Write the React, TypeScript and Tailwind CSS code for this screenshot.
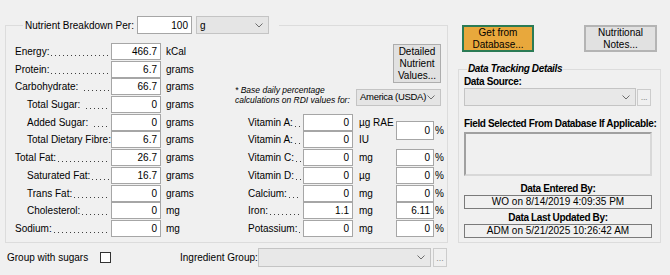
import React from "react";

// chevron used by the combo boxes
const Chevron = () => (
	<svg width="8" height="5" viewBox="0 0 8 5" className="shrink-0">
		<path d="M0.5 0.5 L4 4 L7.5 0.5" fill="none" stroke="#6d6d6d" strokeWidth="1" />
	</svg>
);

const Combo = ({ value, className = "" }: { value?: string; className?: string }) => (
	<div
		className={`flex items-center justify-between whitespace-nowrap border border-[#c4c4c4] bg-[#e5e5e5] pl-[3px] pr-[5px] ${className}`}
	>
		<span>{value}</span>
		<Chevron />
	</div>
);

const DotsButton = ({ className = "" }: { className?: string }) => (
	<div
		className={`flex items-end justify-center border border-[#cccccc] bg-[#f0f0f0] pb-[3px] text-[9px] leading-none text-[#8a8a8a] ${className}`}
	>
		...
	</div>
);

const Box = ({ value, className = "" }: { value: string; className?: string }) => (
	<div
		className={`flex shrink-0 items-center justify-end border border-[#a6a6a6] bg-white pr-[3px] ${className}`}
	>
		{value}
	</div>
);

// dotted leader between a label and its field
const Leader = ({ className = "" }: { className?: string }) => (
	<span
		className={`h-[17px] min-w-0 flex-1 bg-[linear-gradient(to_right,#404040_1px,transparent_1px)] bg-[length:4px_1px] bg-[position:0_12px] bg-repeat-x ${className}`}
	/>
);

const nutrients = [
	{ label: "Energy:", value: "466.7", unit: "kCal", indent: false, dots: true },
	{ label: "Protein:", value: "6.7", unit: "grams", indent: false, dots: true },
	{ label: "Carbohydrate:", value: "66.7", unit: "grams", indent: false, dots: true, gap: true },
	{ label: "Total Sugar:", value: "0", unit: "grams", indent: true, dots: true, gap: true },
	{ label: "Added Sugar:", value: "0", unit: "grams", indent: true, dots: true, gap: true },
	{ label: "Total Dietary Fibre:", value: "6.7", unit: "grams", indent: true, dots: false },
	{ label: "Total Fat:", value: "26.7", unit: "grams", indent: false, dots: true },
	{ label: "Saturated Fat:", value: "16.7", unit: "grams", indent: true, dots: true },
	{ label: "Trans Fat:", value: "0", unit: "grams", indent: true, dots: true },
	{ label: "Cholesterol:", value: "0", unit: "mg", indent: true, dots: true },
	{ label: "Sodium:", value: "0", unit: "mg", indent: false, dots: true },
];

const vitamins = [
	{ label: "Vitamin C:", value: "0", unit: "mg", pct: "0" },
	{ label: "Vitamin D:", value: "0", unit: "µg", pct: "0" },
	{ label: "Calcium:", value: "0", unit: "mg", pct: "0" },
	{ label: "Iron:", value: "1.1", unit: "mg", pct: "6.11" },
	{ label: "Potassium:", value: "0", unit: "mg", pct: "0" },
];

const VitaminRow = ({ label, value, unit }: { label: string; value: string; unit: string }) => (
	<div className="flex h-[17.7px] items-start">
		<div className="flex h-[17px] w-[68px] shrink-0 whitespace-nowrap pl-[13px] pr-[2px] leading-[17px]">
			<span>{label}</span>
			<Leader className="ml-[2px]" />
		</div>
		<Box value={value} className="h-[17px] w-[50px]" />
		<div className="w-[43px] shrink-0 whitespace-nowrap pl-[6px] leading-[17px]">{unit}</div>
	</div>
);

const Pct = ({ value, className = "" }: { value: string; className?: string }) => (
	<div className="flex items-center">
		<Box value={value} className={`w-[38px] ${className}`} />
		<span className="ml-[1px]">%</span>
	</div>
);

export default function App() {
	return (
		<div className="flex h-[275px] w-[670px] items-start gap-[10px] overflow-hidden bg-[#f0f0f0] pl-[5px] pt-[16px] font-['Liberation_Sans',Arial,sans-serif] text-[10px] text-black">
			{/* left part */}
			<div className="flex w-[443px] shrink-0 flex-col">
				<fieldset className="h-[227px] border border-[#dcdcdc] pl-[9px] pr-[6px]">
					<legend className="ml-[8px] flex h-[18px] items-center pl-[2px] pr-[10px]">
						<span className="mr-[3px]">Nutrient Breakdown Per:</span>
						<Box value="100" className="h-[18px] w-[55px]" />
						<Combo value="g" className="ml-[4px] h-[18px] w-[73px]" />
					</legend>
					<div className="flex pt-[9px]">
						<div className="w-[220px] shrink-0">
							{nutrients.map((n) => (
								<div key={n.label} className="flex h-[17.7px] items-start">
									<div
										className={`flex h-[17px] w-[96px] shrink-0 whitespace-nowrap pr-[2px] leading-[17px] ${
											n.indent ? "pl-[12px]" : ""
										}`}
									>
										<span>{n.label}</span>
										{n.dots && <Leader className={n.gap ? "ml-[6px]" : "ml-[2px]"} />}
									</div>
									<Box value={n.value} className="h-[17px] w-[50px]" />
									<span className="pl-[5px] leading-[17px]">{n.unit}</span>
								</div>
							))}
						</div>

						<div className="w-[206px] shrink-0">
							<div className="flex h-[70.8px] flex-col">
								<div className="mt-[1px] flex h-[39px] w-[48px] items-center justify-center self-end border border-[#adadad] bg-[#e1e1e1] text-center leading-[12px]">
									Detailed
									<br />
									Nutrient
									<br />
									Values...
								</div>
								<div className="mt-[2px] flex items-start">
									<div className="text-[8.5px] italic leading-[10px]">
										* Base daily percentage
										<br />
										calculations on RDI values for:
									</div>
									<Combo
										value="America (USDA)"
										className="ml-auto mt-[4px] h-[17px] w-[85px] pl-[3px] pr-[5px] text-[9.5px] tracking-[-0.3px]"
									/>
								</div>
							</div>

							<div className="flex">
								<div>
									<VitaminRow label="Vitamin A:" value="0" unit="µg RAE" />
									<VitaminRow label="Vitamin A:" value="0" unit="IU" />
								</div>
								<div className="mt-[7px]">
									<Pct value="0" className="h-[19px]" />
								</div>
							</div>
							{vitamins.map((v) => (
								<div key={v.label} className="flex h-[17.7px] items-start">
									<VitaminRow label={v.label} value={v.value} unit={v.unit} />
									<Pct value={v.pct} className="h-[17px]" />
								</div>
							))}
						</div>
					</div>
				</fieldset>

				<div className="mt-[5px] flex h-[19px] items-center">
					<span className="ml-[2px] w-[93px]">Group with sugars</span>
					<div className="h-[11px] w-[11px] border border-[#333333] bg-white" />
					<span className="ml-[69px] w-[78px]">Ingredient Group:</span>
					<Combo className="h-[19px] w-[173px] bg-[#e8e8e8]" />
					<DotsButton className="ml-[2px] h-[19px] w-[14px]" />
				</div>
			</div>

			{/* right part */}
			<div className="mt-[9px] flex w-[199px] shrink-0 flex-col">
				<div className="flex justify-between pl-[4px]">
					<div className="flex h-[27px] w-[72px] items-center justify-center border-2 border-[#2b7b55] bg-[#e8a83c] text-center leading-[12px]">
						Get from
						<br />
						Database...
					</div>
					<div className="flex h-[27px] w-[73px] items-center justify-center border-2 border-[#b4b4b4] bg-[#e1e1e1] text-center leading-[12px]">
						Nutritional
						<br />
						Notes...
					</div>
				</div>

				<fieldset className="mt-[11px] h-[180px] border border-[#dcdcdc] pl-[5px] pr-[4px] tracking-[-0.35px]">
					<legend className="ml-[3px] px-[1px] font-bold italic leading-[12px]">Data Tracking Details</legend>
					<div className="mt-[1px] font-bold leading-[12px]">Data Source:</div>
					<div className="flex">
						<Combo className="h-[18px] w-[172px] bg-[#e8e8e8]" />
						<DotsButton className="ml-[1px] mt-[1px] h-[17px] w-[14px]" />
					</div>
					<div className="mt-[12px] whitespace-nowrap font-bold leading-[12px]">
						Field Selected From Database If Applicable:
					</div>
					<div className="mt-[2px] h-[44px] w-[188px] border-2 border-[#a0a0a0] border-r-[#d8d8d8] border-b-[#d8d8d8] bg-[#f0f0f0]" />
					<div className="mt-[7px] w-[188px] text-center font-bold leading-[12px]">Data Entered By:</div>
					<div className="flex h-[14px] w-[188px] items-center justify-center border border-[#7a7a7a] leading-none tracking-normal">
						WO on 8/14/2019 4:09:35 PM
					</div>
					<div className="mt-[3px] w-[188px] text-center font-bold leading-[12px]">Data Last Updated By:</div>
					<div className="flex h-[14px] w-[188px] items-center justify-center border border-[#7a7a7a] leading-none tracking-normal">
						ADM on 5/21/2025 10:26:42 AM
					</div>
				</fieldset>
			</div>
		</div>
	);
}
